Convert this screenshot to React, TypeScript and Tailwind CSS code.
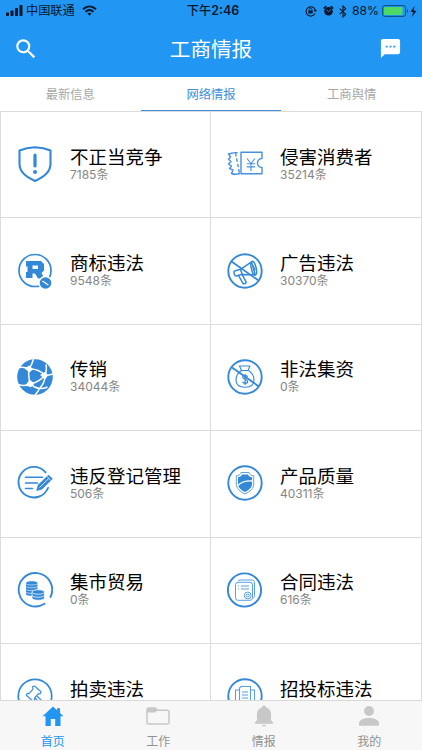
import React, { useState } from 'react'

type IconProps = { className?: string }

const ShieldAlert: React.FC = () => (
  <svg width="36" height="36" viewBox="0 0 36 36" fill="none" stroke="#3388d8" strokeWidth="2.1" strokeLinejoin="round" strokeLinecap="round">
    <path d="M18 1.3C13 1.6 7.500 2.500 2.500 4.500V18c0 8 6.500 13 15.500 17 9-4 15.500-9 15.500-17V4.500C28.500 2.500 23 1.600 18 1.300Z" />
    <path d="M18 9v11" strokeWidth="3.200" />
    <circle cx="18" cy="26" r="2" fill="#3388d8" stroke="none" />
  </svg>
)

const Ticket: React.FC = () => (
  <svg width="36" height="36" viewBox="0 0 36 36" fill="none" stroke="#4990df" strokeWidth="1.4" strokeLinejoin="round">
    <path d="M14 6.200h21v6.300c-6 0-6 9 0 9v6.200H14Z" />
    <path d="M10.500 6.800C7 6 4 7.500 1.500 8l2 3-2 2.500 2.600 2-2.600 2.500 3 2-2 2.500 3.500 1.500-1.500 3.500c2 1 5 1 8.500 0" />
    <path d="M8.500 7 12.500 27.500" strokeDasharray="3.500 2" />
    <path d="m20 12.500 4 5 4-5M24 17.500v7.500M19.800 17.800h8.400M19.800 20.900h8.400" strokeWidth="1.100" />
  </svg>
)

const Trademark: React.FC = () => (
  <svg width="36" height="36" viewBox="0 0 36 36" fill="none">
    <circle cx="18" cy="17.500" r="16" stroke="#3388d8" strokeWidth="1.700" />
    <path fillRule="evenodd" fill="#3388d8" d="M9 8h15l3 3v6.500L24.500 20l3 5.500h-6.500L18 20.500h-2.500V25H9v-6h1.500v-5.500H9ZM15.500 12.500v3.500h5.500v-3.500Z" />
    <circle cx="28.500" cy="30" r="7.200" fill="white" />
    <circle cx="28.500" cy="30" r="5.800" fill="#3388d8" />
    <path d="m25.300 28.100 6 3.800" stroke="white" strokeWidth="1.200" />
  </svg>
)

const NoAds: React.FC = () => (
  <svg width="36" height="36" viewBox="0 0 36 36" fill="none" stroke="#3388d8" strokeWidth="1.500" strokeLinejoin="round">
    <circle cx="18" cy="18" r="16.700" strokeWidth="1.900" />
    <path d="m4.500 8.500 27 19" strokeWidth="1.700" />
    <path d="m7.500 18 6-1.700L24.500 8.800l3.700 13-14-.3-5 1.500c-1.500.2-3-4-1.700-5Z" />
    <ellipse cx="26.700" cy="15.200" rx="2.400" ry="7" transform="rotate(-13 26.700 15.200)" />
    <path d="m11.500 22.500 4.500 7.800c1.300 1 3.500 0 3-1.700l-3.800-7M13.500 16.500l1.800 5M26 12.500l2 5" />
  </svg>
)

const Ball: React.FC = () => (
  <svg width="36" height="36" viewBox="0 0 36 36">
    <circle cx="18" cy="18" r="17.800" fill="#3388d8" />
    <g fill="none" stroke="white" strokeWidth="1.500">
      <path d="M12 10c2-3 3.500-6 4.500-10M12 10C9 8.500 6.500 8 3 8.500M12 10c6-.7 11 1.500 16 6M12 10c-.8 5-.3 10 1.500 15M28 16c-3.500 4.500-8 7.500-14.500 9M28 16c1.500-3 1.800-6 1-10.500M28 16c3 .5 5.500 0 8-1M13.500 25c-4 1.800-8 2-12.500.5M13.500 25c2.500 2.500 5 4 9 4.500M22.500 29.500c3.500-3.500 5.500-8 5.500-13.500M22.500 29.500c-1 2.500-2.500 4.500-4.500 6.500M22.500 29.500c3 .3 5.500-.3 8-1.500" />
    </g>
    <path d="m12 6.500 4 3.500-3.500 3.500L7.500 9.500Zm16.500 6 2.500 4-3 4-5-4.500ZM12.500 20.500l5 4-3.500 3.700L8.500 26.500Z" fill="white" />
  </svg>
)

const NoFunding: React.FC = () => (
  <svg width="36" height="36" viewBox="0 0 36 36" fill="none" stroke="#3388d8" strokeWidth="1.100" strokeLinejoin="round">
    <circle cx="18" cy="18" r="16.700" strokeWidth="1.900" />
    <path d="M14.500 11.500 12.500 7h10.500l-2 4.500M14 11.500h7.500" />
    <path d="M14.500 11.500C10.500 14 9 18 9 21c0 5 4 7.300 9 7.300s9-2.300 9-7.300c0-3-1.500-7-5.500-9.500" />
    <path d="M20.700 17.700c-1-1.700-5-1.500-5 .6 0 2.400 5 1.600 5 4.200 0 2.200-4.200 2.500-5.200.3M18.200 15v11" strokeWidth="1.200" />
    <path d="m5 8.500 26.500 18.700" strokeWidth="1.800" />
  </svg>
)

const Register: React.FC = () => (
  <svg width="36" height="36" viewBox="0 0 36 36" fill="none" stroke="#3388d8" strokeWidth="1.600" strokeLinecap="round">
    <path d="M28.500 7.300A15.300 15.300 0 1 0 31 23" strokeWidth="1.900" />
    <path d="M8.500 12.300h17M8.500 18h12M8.500 23.500h7" />
    <path d="m19.300 26 1.500-6L31.500 9.800l4.300 4L25 24.500Z" fill="#3388d8" stroke="none" />
    <path d="m22.800 22.200 8.700-8.500" stroke="white" strokeWidth=".8" />
    <path d="m30 11.500 3.800 3.800" stroke="white" strokeWidth=".7" />
  </svg>
)

const Quality: React.FC = () => (
  <svg width="36" height="36" viewBox="0 0 36 36" fill="none">
    <circle cx="18" cy="18" r="16.700" stroke="#3388d8" strokeWidth="1.900" />
    <path d="M14 7.500h8c.6 2 2 3 4.700 3.300V19c0 4.500-3.700 7.500-8.700 10-5-2.500-8.700-5.500-8.700-10v-8.200C12 10.500 13.400 9.500 14 7.500Z" stroke="#5a9fe2" strokeWidth="1" />
    <path d="M15 9.500h6c.8 1.800 2 2.600 4 2.800V19c0 3.500-3 6-7 8-4-2-7-4.500-7-8v-6.700c2-.2 3.200-1 4-2.800Z" fill="#3388d8" />
    <path d="M11 20.500c3-3.500 7.500-4.800 14-4.500" stroke="white" strokeWidth="1.300" />
  </svg>
)

const Trade: React.FC = () => (
  <svg width="36" height="36" viewBox="0 0 36 36" fill="none">
    <path d="M27.500 31.800A16.700 16.700 0 1 1 33.500 25" stroke="#3388d8" strokeWidth="1.900" strokeLinecap="round" />
    <path d="M9 11c0-2.500 11.500-2.500 11.500 0v11c0 2.500-11.500 2.500-11.500 0Z" fill="#3388d8" />
    <path d="M9 11.500c0 2 11.500 2 11.500 0M9 14.300c0 2 11.500 2 11.500 0M9 17.100c0 2 11.500 2 11.500 0M9 19.900c0 2 11.500 2 11.500 0" stroke="white" strokeWidth=".6" />
    <path d="M15 20c0-3 12.500-3 12.500 0v6c0 3-12.500 3-12.500 0Z" fill="#3388d8" stroke="white" strokeWidth=".8" />
    <path d="M15.500 20.500c0 2.300 11.500 2.300 11.500 0M15.500 23.500c0 2.300 11.500 2.300 11.500 0" stroke="white" strokeWidth=".8" />
  </svg>
)

const Contract: React.FC = () => (
  <svg width="36" height="36" viewBox="0 0 36 36" fill="none" stroke="#5a9fe2" strokeWidth="1">
    <circle cx="17.500" cy="18" r="16.600" stroke="#3388d8" strokeWidth="1.900" />
    <path d="M11 9.200c.2-.7 1-1.200 2-1.200h12c1.500 0 2.500 1 2.500 2.500v13c0 1.500-.5 2-1.500 2.500" />
    <rect x="8.500" y="10.300" width="17" height="18" rx="2.500" />
    <path d="M11 14h1M14 14h8M11 17h1M14 17h8" strokeWidth="1.200" />
    <circle cx="20.700" cy="23.500" r="3.400" fill="white" />
    <circle cx="20.700" cy="23.500" r="1.500" />
  </svg>
)

const Auction: React.FC = () => (
  <svg width="36" height="36" viewBox="0 0 36 36" fill="none" stroke="#3f90db" strokeWidth="1.200" strokeLinejoin="round">
    <circle cx="18" cy="18" r="16.700" stroke="#3388d8" strokeWidth="1.700" />
    <path d="m15.500 8.500 2-.5 6.500 5.700-1 2.300-1.500-.3-4 4.300.2 2-2 .8-6.500-5.500 1-2 1.800.3 4-4.500Z" />
    <path d="m20 18 8 8M18 20l8 8M7 26h11" />
  </svg>
)

const Bidding: React.FC = () => (
  <svg width="36" height="36" viewBox="0 0 36 36" fill="none" stroke="#5a9fe2" strokeWidth="1.100">
    <circle cx="18" cy="18" r="16.700" stroke="#3388d8" strokeWidth="1.900" />
    <path d="M12.500 28V10l1.500-1.500h9.500V28ZM12.500 12H8.500v16M23.500 12h4v16M15 14h6M15 17h6M15 20h6" />
  </svg>
)

const categories = [
  { name: '不正当竞争', count: 7185, Icon: ShieldAlert },
  { name: '侵害消费者', count: 35214, Icon: Ticket },
  { name: '商标违法', count: 9548, Icon: Trademark },
  { name: '广告违法', count: 30370, Icon: NoAds },
  { name: '传销', count: 34044, Icon: Ball },
  { name: '非法集资', count: 0, Icon: NoFunding },
  { name: '违反登记管理', count: 506, Icon: Register },
  { name: '产品质量', count: 40311, Icon: Quality },
  { name: '集市贸易', count: 0, Icon: Trade },
  { name: '合同违法', count: 616, Icon: Contract },
  { name: '拍卖违法', count: 0, Icon: Auction },
  { name: '招投标违法', count: 0, Icon: Bidding },
]

const HomeIcon: React.FC<IconProps> = ({ className }) => (
  <svg width="24" height="24" viewBox="0 0 24 24" className={className} fill="currentColor">
    <path d="M12 2.500 1.500 12.300h3V22h5.300v-7h4.400v7h5.300v-9.700h3L19 9V4.200h-3v2.100Z" />
  </svg>
)

const FolderIcon: React.FC<IconProps> = ({ className }) => (
  <svg width="24" height="24" viewBox="0 0 24 24" className={className} fill="none" stroke="currentColor" strokeWidth="1.500">
    <path d="M1 18.500v-13C1 4.500 1.500 4 2.500 4h6.700l2 2.300h10.300c1 0 1.500.5 1.500 1.500v10.700c0 1-.5 1.500-1.500 1.500h-19C1.500 20 1 19.500 1 18.500Z" />
    <path d="M1 5.500C1 4.500 1.500 4 2.500 4h6.700l2 2.500L9 8.500H1Z" fill="currentColor" stroke="none" />
  </svg>
)

const BellIcon: React.FC<IconProps> = ({ className }) => (
  <svg width="24" height="24" viewBox="0 0 24 24" className={className} fill="currentColor">
    <path d="M12 1.500c-1 0-1.700.7-1.700 1.700-3.500.8-5.300 3.500-5.300 7V16l-2 2.500v1.200h18v-1.200L19 16v-5.800c0-3.500-1.800-6.200-5.300-7 0-1-.7-1.700-1.700-1.700ZM10 20.700c0 2.300 4 2.300 4 0Z" />
  </svg>
)

const UserIcon: React.FC<IconProps> = ({ className }) => (
  <svg width="24" height="24" viewBox="0 0 24 24" className={className} fill="currentColor">
    <circle cx="12" cy="7" r="5" />
    <path d="M2 21.800v-2.500c0-3.500 5-5.300 10-5.300s10 1.800 10 5.300v2.500Z" />
  </svg>
)

const navItems = [
  { name: '首页', Icon: HomeIcon },
  { name: '工作', Icon: FolderIcon },
  { name: '情报', Icon: BellIcon },
  { name: '我的', Icon: UserIcon },
]

const tabs = ['最新信息', '网络情报', '工商舆情']

const StatusBar: React.FC = () => (
  <div className="grid h-[22px] grid-cols-[1fr_auto_1fr] items-center pr-[5px] pl-[6px] text-[12px] leading-none text-[#07172a]">
    <div className="flex items-center">
      <svg width="17" height="12" viewBox="0 0 17 12" fill="currentColor">
        <rect x="0" y="7.500" width="3" height="3.500" rx=".7" />
        <rect x="4.500" y="5.500" width="3" height="5.500" rx=".7" />
        <rect x="9" y="3" width="3" height="8" rx=".7" />
        <rect x="13.500" y="0" width="3" height="11" rx=".7" />
      </svg>
      <span className="ml-[3px] pt-px text-[12.200px]">中国联通</span>
      <svg width="15" height="11" viewBox="0 0 15 11" className="ml-[7px]" fill="none" stroke="currentColor" strokeWidth="2">
        <path d="M1 4.200c4-3.700 9-3.700 13 0M3.500 6.800c2.500-2.300 5.500-2.300 8 0" />
        <path d="m7.500 10.800-2-2.200c1.200-1 2.800-1 4 0Z" fill="currentColor" stroke="none" />
      </svg>
    </div>
    <div className="pt-px pl-[3px] text-[12.200px] font-medium">下午<span className="text-[12.500px] font-semibold">2:46</span></div>
    <div className="flex items-center justify-end">
      <svg width="12" height="12" viewBox="0 0 12 12" fill="none" stroke="currentColor" strokeWidth="1.100">
        <path d="M10 8.600A4.700 4.700 0 1 1 10.300 5" />
        <path d="M8.500 5H12l-1.700 2.300Z" fill="currentColor" stroke="none" />
        <rect x="3.400" y="5.400" width="4.300" height="3.100" fill="currentColor" stroke="none" />
        <path d="M4.300 5.500V4.300c0-1.600 2.500-1.600 2.500 0v1.200" strokeWidth=".8" />
      </svg>
      <svg width="11" height="12" viewBox="0 0 11 12" className="ml-[6px]" fill="currentColor">
        <circle cx="5.500" cy="6.300" r="4.300" />
        <path d="M.8 3.500 3.200 1.200M10.200 3.500 7.800 1.200" stroke="currentColor" strokeWidth="1.600" />
        <path d="M5.500 6.600 8 4.400M5.500 6.600 3.700 5.100" stroke="#2196f3" strokeWidth=".9" fill="none" />
      </svg>
      <svg width="8" height="13" viewBox="0 0 8 13" className="ml-[5px]" fill="none" stroke="currentColor" strokeWidth="1.100">
        <path d="m.7 3.700 6 5.500L4 12V1l2.700 2.700-6 5.500" />
      </svg>
      <span className="ml-[5px] text-[12.200px]">88%</span>
      <svg width="28" height="12" viewBox="0 0 28 12" className="ml-[3px]">
        <rect x=".6" y=".6" width="23" height="10.800" rx="2.300" fill="none" stroke="#0e4c82" strokeWidth="1" />
        <rect x="2" y="2" width="18.500" height="8" rx="1" fill="#4cd964" />
        <path d="M25 4.300c1.500.4 1.500 3 0 3.400Z" fill="#0e4c82" />
      </svg>
      <svg width="7" height="11" viewBox="0 0 7 11" fill="currentColor">
        <path d="M4.500 0 .5 6h2.700L2 11l4.500-6.300H3.700Z" />
      </svg>
    </div>
  </div>
)

const App: React.FC = () => {
  const [activeTab, setActiveTab] = useState(1)
  const [activeNav, setActiveNav] = useState(0)

  return (
    <div className="flex h-[750px] w-[422px] flex-col overflow-hidden bg-white font-['Inter','Noto_Sans_CJK_SC',sans-serif]">
      {/* Header */}
      <header className="h-[77px] shrink-0 bg-[#2196f3]">
        <StatusBar />
        <div className="flex h-[53px] items-center justify-between pr-[20px] pl-[13px] text-white">
          <button className="w-[27px]">
            <svg width="26" height="26" viewBox="0 0 24 24" fill="currentColor">
              <path d="M15.500 14h-.79l-.28-.27A6.470 6.470 0 0 0 16 9.500 6.500 6.500 0 1 0 9.500 16c1.610 0 3.090-.59 4.230-1.570l.27.28v.79l5 4.990L20.490 19l-4.990-5zm-6 0C7.010 14 5 11.990 5 9.500S7.010 5 9.500 5 14 7.010 14 9.500 11.990 14 9.500 14z" />
            </svg>
          </button>
          <h1 className="ml-[3px] pt-[3px] text-[20.600px] leading-none">工商情报</h1>
          <button className="pb-px">
            <svg width="23" height="23" viewBox="0 0 24 24" fill="currentColor">
              <path d="M20 2H4c-1.100 0-1.990.9-1.990 2L2 22l4-4h14c1.100 0 2-.9 2-2V4c0-1.100-.9-2-2-2zM9 11H7V9h2v2zm4 0h-2V9h2v2zm4 0h-2V9h2v2z" />
            </svg>
          </button>
        </div>
      </header>

      {/* Tabs */}
      <div className="grid h-[34px] shrink-0 grid-cols-3">
        {tabs.map((tab, i) => (
          <button
            key={tab}
            onClick={() => setActiveTab(i)}
            className={`border-b pt-[3px] text-[12.300px] leading-none ${i === activeTab ? 'border-[#3d8fdd] text-[#3d8fdd]' : 'border-transparent text-[#a8a8a8]'}`}
          >
            {tab}
          </button>
        ))}
      </div>

      {/* Category list */}
      <main className="grid min-h-0 flex-1 auto-rows-[106.400px] grid-cols-[210px_211px] overflow-hidden border-t border-l border-[#dcdcdc]">
        {categories.map(({ name, count, Icon }) => (
          <div key={name} className="flex items-center border-r border-b border-[#dcdcdc] pb-px pl-4">
            <Icon />
            <div className="mt-[1px] ml-[17px]">
              <div className="text-[18.500px] leading-[19px] text-black">{name}</div>
              <div className="text-[12px] leading-[15px] text-[#858585]">{count}条</div>
            </div>
          </div>
        ))}
      </main>

      {/* Bottom navigation */}
      <nav className="grid h-[50px] shrink-0 grid-cols-4 border-t border-[#d9d9d9] bg-[#f7f7f7]">
        {navItems.map(({ name, Icon }, i) => (
          <button
            key={name}
            onClick={() => setActiveNav(i)}
            className={`flex flex-col items-center pt-[3px] text-[12px] leading-none ${i === activeNav ? 'text-[#2196f3]' : 'text-[#929292]'}`}
          >
            <Icon className={i === activeNav ? 'text-[#2196f3]' : 'text-[#c8c8c8]'} />
            <span className="mt-[8px]">{name}</span>
          </button>
        ))}
      </nav>
    </div>
  )
}

export default App
